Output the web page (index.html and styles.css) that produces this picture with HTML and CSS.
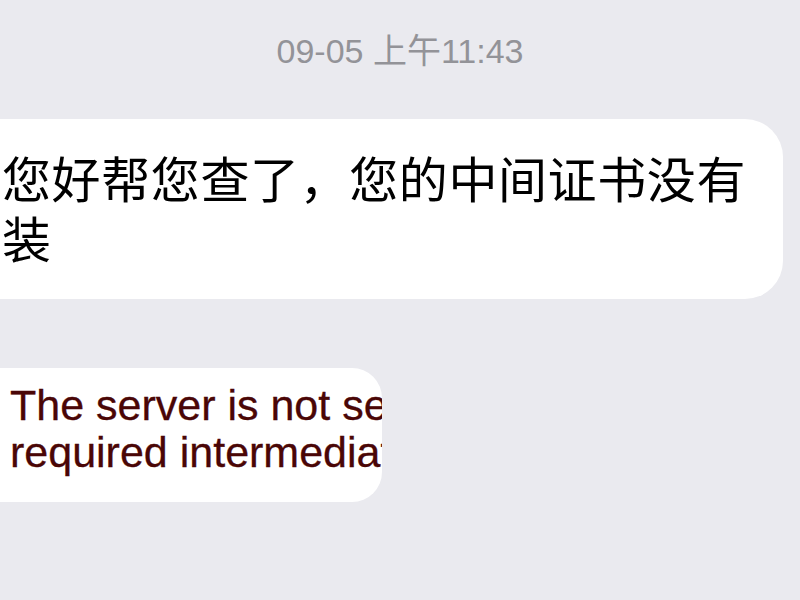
FILE: index.html
```html
<!DOCTYPE html>
<html lang="zh-CN">
<head>
<meta charset="utf-8">
<title>Chat</title>
<link rel="stylesheet" href="styles.css">
</head>
<body>
<div class="chat">
  <div class="timestamp">09-05 上午11:43</div>
  <div class="bubble bubble-text">您好帮您查了，您的中间证书没有装</div>
  <div class="bubble bubble-snippet">
    <div class="snippet-line">The server is not sending the</div>
    <div class="snippet-line">required intermediate certificate.</div>
  </div>
</div>
</body>
</html>
```
FILE: styles.css
```css
html, body {
  margin: 0;
  padding: 0;
  background: #eaeaef;
}
body {
  width: 800px;
  height: 600px;
  overflow: hidden;
}
.chat {
  display: flex;
  flex-direction: column;
  align-items: flex-start;
  padding-top: 31px;
}
.timestamp {
  align-self: center;
  font-family: "Liberation Sans", "Noto Sans CJK SC", sans-serif;
  font-size: 34px;
  line-height: 41px;
  color: #939398;
}
.bubble {
  background: #ffffff;
  box-sizing: border-box;
  margin-left: -40px;
}
.bubble-text {
  margin-top: 47px;
  width: 823px;
  padding: 28px 30px 32px 42px;
  border-radius: 38px;
  font-family: "Noto Sans CJK SC", sans-serif;
  font-size: 49px;
  letter-spacing: 0.6px;
  line-height: 60px;
  color: #000000;
}
.bubble-snippet {
  margin-top: 69px;
  width: 422px;
  padding: 14px 0 26px 50px;
  border-radius: 30px;
  overflow: hidden;
  font-family: "Liberation Sans", Arial, sans-serif;
  font-size: 43px;
  line-height: 47px;
  color: #4a0606;
  -webkit-text-stroke: 0.3px #4a0606;
}
.snippet-line {
  white-space: nowrap;
}
```
